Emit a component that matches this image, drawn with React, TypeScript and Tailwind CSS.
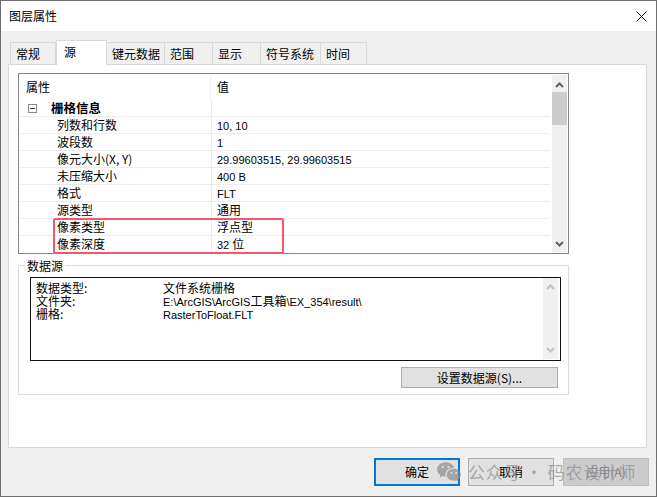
import { RiWechatFill } from 'react-icons/ri';

const tabs = [
  { label: '常规', width: 'w-[46px]' },
  { label: '源', width: 'w-[51px]', active: true },
  { label: '键元数据', width: 'w-[58px]' },
  { label: '范围', width: 'w-[48px]' },
  { label: '显示', width: 'w-[48px]' },
  { label: '符号系统', width: 'w-[60px]' },
  { label: '时间', width: 'w-[46px]' },
];

const rows = [
  ['列数和行数', '10, 10'],
  ['波段数', '1'],
  ['像元大小(X, Y)', '29.99603515, 29.99603515'],
  ['未压缩大小', '400 B'],
  ['格式', 'FLT'],
  ['源类型', '通用'],
  ['像素类型', '浮点型'],
  ['像素深度', '32 位'],
];

const sourceRows = [
  ['数据类型:', '文件系统栅格'],
  ['文件夹:', 'E:\\ArcGIS\\ArcGIS工具箱\\EX_354\\result\\'],
  ['栅格:', 'RasterToFloat.FLT'],
];

// Latin runs sit in a narrower face than the Chinese ones, as in the dialog
function Value({ text }: { text: string }) {
  return (
    <>
      {text.split(/([\u4e00-\u9fff]+)/).filter(Boolean).map(part =>
        /[\u4e00-\u9fff]/.test(part) ? (
          <span key={part} className="text-[12px]">{part}</span>
        ) : (
          <span key={part} className="text-[11px] font-['Liberation_Sans',sans-serif]">{part}</span>
        ),
      )}
    </>
  );
}

function Chevron({ up, color }: { up?: boolean; color: string }) {
  return (
    <svg width="9" height="6" viewBox="0 0 9 6" fill="none" stroke={color} strokeWidth="2">
      <path d={up ? 'M1 5 L4.5 1.5 L8 5' : 'M1 1 L4.5 4.5 L8 1'} />
    </svg>
  );
}

export default function App() {
  return (
    <div
      className="relative w-[657px] h-[497px] flex flex-col bg-[#f0f0f0] border border-[#6e6e6e] text-[12px] text-black overflow-hidden"
      style={{ fontFamily: '"Noto Sans CJK SC", "Liberation Sans", sans-serif' }}
    >
      {/* title bar */}
      <div className="h-[30px] shrink-0 bg-white flex items-center justify-between pl-[8px] pr-[9px]">
        <span className="leading-[30px]">图层属性</span>
        <svg width="11" height="11" viewBox="0 0 11 11" stroke="#111" strokeWidth="1">
          <path d="M0.5 0.5 L10.5 10.5 M10.5 0.5 L0.5 10.5" />
        </svg>
      </div>

      {/* tabs */}
      <div className="flex items-end h-[33px] shrink-0 pl-[9px] relative z-10">
        {tabs.map(tab => (
          <div
            key={tab.label}
            className={
              tab.active
                ? `${tab.width} h-[25px] -mb-px bg-white border border-b-0 border-[#d9d9d9] pl-[7px] pt-[2px] leading-[18px]`
                : `${tab.width} h-[22px] bg-[#f0f0f0] border border-b-0 border-l-0 border-[#d9d9d9] first:border-l pl-[5px] leading-[22px] whitespace-nowrap`
            }
          >
            {tab.label}
          </div>
        ))}
      </div>

      {/* tab panel */}
      <div className="ml-[7px] mr-[9px] h-[384px] shrink-0 bg-white border border-[#d9d9d9] pt-[8px] pl-[9px]">
        {/* property list */}
        <div className="w-[551px] h-[181px] border border-[#82878c] bg-white flex p-px">
          <div className="w-[530px] shrink-0 overflow-hidden">
            <div className="flex h-[25px]">
              <div className="w-[191px] pl-[6px] leading-[24px] border-r border-[#f0f0f0]">属性</div>
              <div className="pl-[6px] leading-[24px]">值</div>
            </div>
            <div className="flex h-[17px] border-b border-[#ececec]">
              <div className="w-[191px] flex items-center pl-[8px]">
                <div className="w-[9px] h-[9px] border border-[#8a8a8a] flex items-center justify-center">
                  <div className="w-[5px] h-px bg-[#333]" />
                </div>
                <span className="ml-[14px] font-bold text-[12.5px] leading-[16px]">栅格信息</span>
              </div>
              <div className="border-l border-[#ececec]" />
            </div>
            {rows.map(([name, value]) => (
              <div key={name} className="flex h-[17px] border-b border-[#ececec]">
                <div className="w-[191px] pl-[37px] leading-[16px] whitespace-nowrap">{name}</div>
                <div className="pl-[5px] border-l border-[#ececec] leading-[16px] whitespace-nowrap">
                  <Value text={value} />
                </div>
              </div>
            ))}
          </div>
          <div className="ml-[2px] w-[15px] shrink-0 bg-[#f0f0f0] flex flex-col items-center justify-between">
            <div className="w-full">
              <div className="h-[17px] flex items-center justify-center pt-[3px]">
                <Chevron up color="#606060" />
              </div>
              <div className="h-[33px] bg-[#cdcdcd]" />
            </div>
            <div className="h-[17px] flex items-center justify-center">
              <Chevron color="#606060" />
            </div>
          </div>
        </div>

        {/* data source group */}
        <div className="relative mt-[11px] w-[551px] h-[130px] border border-[#dcdcdc] pt-[11px] pl-[11px]">
          <span className="absolute -top-[8px] left-[6px] bg-white px-[2px] leading-[16px]">数据源</span>
          <div className="w-[531px] h-[84px] border border-[#111] flex bg-white">
            <div className="flex-1 min-w-0 pl-[5px] pt-[3px]">
              {sourceRows.map(([name, value]) => (
                <div key={name} className="grid grid-cols-[127px_1fr] h-[13px] leading-[13px] whitespace-nowrap">
                  <div>{name}</div>
                  <div><Value text={value} /></div>
                </div>
              ))}
            </div>
            <div className="w-[15px] shrink-0 mr-[2px] mb-[1px] bg-[#f0f0f0] flex flex-col items-center justify-between py-[6px]">
              <Chevron up color="#c0c0c0" />
              <Chevron color="#c0c0c0" />
            </div>
          </div>
          <div className="flex justify-end mt-[6px] pr-[10px]">
            <button className="w-[157px] h-[21px] bg-[#e1e1e1] border border-[#adadad] leading-[18px]">
              设置数据源(S)...
            </button>
          </div>
        </div>
      </div>

      {/* footer buttons */}
      <div className="flex mt-[10px] pl-[373px]">
        <button className="w-[86px] h-[28px] bg-[#e1e1e1] border-2 border-[#0078d7]">确定</button>
        <button className="ml-[8px] w-[86px] h-[28px] bg-[#e1e1e1] border border-[#adadad]">取消</button>
        <button className="ml-[9px] w-[86px] h-[28px] bg-[#cccccc] border border-[#bfbfbf] text-[#838383]">应用(A)</button>
      </div>

      {/* highlight drawn over the list */}
      <div className="absolute left-[52px] top-[217px] w-[231px] h-[36px] border-2 border-[#f4566e] rounded-[2px] pointer-events-none" />

      {/* watermark */}
      <div className="absolute left-[435px] top-[458px] flex items-center text-[#8c8c8c]/70 pointer-events-none">
        <RiWechatFill size={26} />
        <span className="ml-[6px] text-[17px] tracking-[0.7px] leading-[24px] whitespace-nowrap">公众号 · 码农设计师</span>
      </div>
    </div>
  );
}
